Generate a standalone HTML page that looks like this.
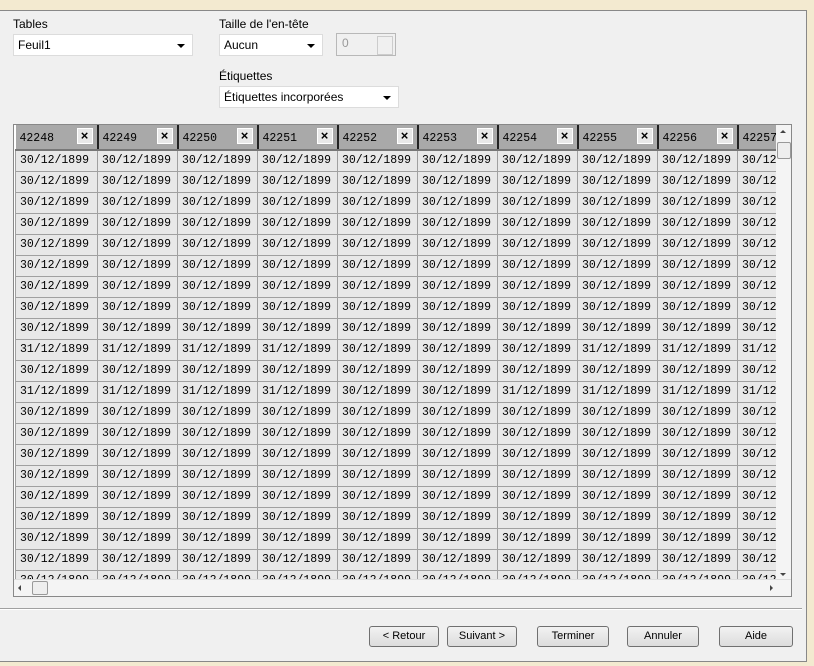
<!DOCTYPE html>
<html><head><meta charset="utf-8"><style>
body{margin:0;width:814px;height:666px;background:#f3ead0;position:relative;overflow:hidden;font-family:"Liberation Sans",sans-serif;font-size:11px;color:#000}
.dlg{position:absolute;left:0;top:10px;width:806px;height:650px;background:#f0f0f0;border-top:1px solid #888;border-right:1px solid #888;border-bottom:1px solid #888}
.lbl{position:absolute;font-size:12px}
.combo{position:absolute;height:22px;background:#fff;border:1px solid #dcdcdc;box-sizing:border-box;font-size:12px;line-height:20px;padding-left:4px}
.combo:after{content:"";position:absolute;right:7px;top:9px;border-left:4px solid transparent;border-right:4px solid transparent;border-top:4px solid #000}
.grid{position:absolute;left:13px;top:124px;width:779px;height:473px;border:1px solid #888;box-sizing:border-box;background:#fff;overflow:hidden}
.clip{position:absolute;left:1px;top:0px;width:762px;height:456px;overflow:hidden}
table{border-collapse:collapse;table-layout:fixed;width:800px;font-family:"Liberation Mono",monospace;font-size:11.5px}
td{height:21px;border:1px solid #a0a0a0;background:#e8e8e8;padding:0 0 0 4px;white-space:nowrap;overflow:hidden;box-sizing:border-box}
th{height:25px;background:#a9a9a9;text-align:left;font-weight:normal;padding:2px 0 0 4px;box-sizing:border-box;border-left:2px solid #222;border-bottom:2px solid #777;position:relative;overflow:hidden;white-space:nowrap}
th:first-child{border-left:none}
th span{position:absolute;right:4px;top:3px;width:14px;height:14px;background:#e8e8e8;border:1px solid #fff;font-family:"Liberation Sans",sans-serif;font-size:13px;font-weight:bold;line-height:14px;text-align:center}
.vs{position:absolute;right:0;top:0;width:15px;height:456px;background:#f4f4f4}
.hs{position:absolute;left:0;bottom:0;width:777px;height:16px;background:#f4f4f4;border-top:1px solid #ddd}
.btn{position:absolute;top:626px;height:21px;border:1px solid #707070;border-radius:3px;background:linear-gradient(#f2f2f2,#dcdcdc);box-sizing:border-box;font-size:11px;text-align:center;line-height:19px}
</style></head><body>
<div class="dlg"></div>
<div class="lbl" style="left:13px;top:17px">Tables</div>
<div class="combo" style="left:13px;top:34px;width:180px">Feuil1</div>
<div class="lbl" style="left:219px;top:17px">Taille de l'en-tête</div>
<div class="combo" style="left:219px;top:34px;width:104px">Aucun</div>
<div style="position:absolute;left:336px;top:33px;width:60px;height:23px;border:1px solid #b8b8b8;box-sizing:border-box;background:#f0f0f0;color:#999;font-size:12px;padding:2px 5px">0<div style="position:absolute;right:2px;top:2px;width:14px;height:17px;border:1px solid #ccc"></div></div>
<div class="lbl" style="left:219px;top:69px">Étiquettes</div>
<div class="combo" style="left:219px;top:86px;width:180px">Étiquettes incorporées</div>
<div class="grid"><div class="clip"><table>
<colgroup><col style="width:82px"><col style="width:80px"><col style="width:80px"><col style="width:80px"><col style="width:80px"><col style="width:80px"><col style="width:80px"><col style="width:80px"><col style="width:80px"><col style="width:78px"></colgroup>
<tr><th>42248<span>×</span></th><th>42249<span>×</span></th><th>42250<span>×</span></th><th>42251<span>×</span></th><th>42252<span>×</span></th><th>42253<span>×</span></th><th>42254<span>×</span></th><th>42255<span>×</span></th><th>42256<span>×</span></th><th>42257<span>×</span></th></tr>
<tr><td>30/12/1899</td><td>30/12/1899</td><td>30/12/1899</td><td>30/12/1899</td><td>30/12/1899</td><td>30/12/1899</td><td>30/12/1899</td><td>30/12/1899</td><td>30/12/1899</td><td>30/12/1899</td></tr>
<tr><td>30/12/1899</td><td>30/12/1899</td><td>30/12/1899</td><td>30/12/1899</td><td>30/12/1899</td><td>30/12/1899</td><td>30/12/1899</td><td>30/12/1899</td><td>30/12/1899</td><td>30/12/1899</td></tr>
<tr><td>30/12/1899</td><td>30/12/1899</td><td>30/12/1899</td><td>30/12/1899</td><td>30/12/1899</td><td>30/12/1899</td><td>30/12/1899</td><td>30/12/1899</td><td>30/12/1899</td><td>30/12/1899</td></tr>
<tr><td>30/12/1899</td><td>30/12/1899</td><td>30/12/1899</td><td>30/12/1899</td><td>30/12/1899</td><td>30/12/1899</td><td>30/12/1899</td><td>30/12/1899</td><td>30/12/1899</td><td>30/12/1899</td></tr>
<tr><td>30/12/1899</td><td>30/12/1899</td><td>30/12/1899</td><td>30/12/1899</td><td>30/12/1899</td><td>30/12/1899</td><td>30/12/1899</td><td>30/12/1899</td><td>30/12/1899</td><td>30/12/1899</td></tr>
<tr><td>30/12/1899</td><td>30/12/1899</td><td>30/12/1899</td><td>30/12/1899</td><td>30/12/1899</td><td>30/12/1899</td><td>30/12/1899</td><td>30/12/1899</td><td>30/12/1899</td><td>30/12/1899</td></tr>
<tr><td>30/12/1899</td><td>30/12/1899</td><td>30/12/1899</td><td>30/12/1899</td><td>30/12/1899</td><td>30/12/1899</td><td>30/12/1899</td><td>30/12/1899</td><td>30/12/1899</td><td>30/12/1899</td></tr>
<tr><td>30/12/1899</td><td>30/12/1899</td><td>30/12/1899</td><td>30/12/1899</td><td>30/12/1899</td><td>30/12/1899</td><td>30/12/1899</td><td>30/12/1899</td><td>30/12/1899</td><td>30/12/1899</td></tr>
<tr><td>30/12/1899</td><td>30/12/1899</td><td>30/12/1899</td><td>30/12/1899</td><td>30/12/1899</td><td>30/12/1899</td><td>30/12/1899</td><td>30/12/1899</td><td>30/12/1899</td><td>30/12/1899</td></tr>
<tr><td>31/12/1899</td><td>31/12/1899</td><td>31/12/1899</td><td>31/12/1899</td><td>30/12/1899</td><td>30/12/1899</td><td>30/12/1899</td><td>31/12/1899</td><td>31/12/1899</td><td>31/12/1899</td></tr>
<tr><td>30/12/1899</td><td>30/12/1899</td><td>30/12/1899</td><td>30/12/1899</td><td>30/12/1899</td><td>30/12/1899</td><td>30/12/1899</td><td>30/12/1899</td><td>30/12/1899</td><td>30/12/1899</td></tr>
<tr><td>31/12/1899</td><td>31/12/1899</td><td>31/12/1899</td><td>31/12/1899</td><td>30/12/1899</td><td>30/12/1899</td><td>31/12/1899</td><td>31/12/1899</td><td>31/12/1899</td><td>31/12/1899</td></tr>
<tr><td>30/12/1899</td><td>30/12/1899</td><td>30/12/1899</td><td>30/12/1899</td><td>30/12/1899</td><td>30/12/1899</td><td>30/12/1899</td><td>30/12/1899</td><td>30/12/1899</td><td>30/12/1899</td></tr>
<tr><td>30/12/1899</td><td>30/12/1899</td><td>30/12/1899</td><td>30/12/1899</td><td>30/12/1899</td><td>30/12/1899</td><td>30/12/1899</td><td>30/12/1899</td><td>30/12/1899</td><td>30/12/1899</td></tr>
<tr><td>30/12/1899</td><td>30/12/1899</td><td>30/12/1899</td><td>30/12/1899</td><td>30/12/1899</td><td>30/12/1899</td><td>30/12/1899</td><td>30/12/1899</td><td>30/12/1899</td><td>30/12/1899</td></tr>
<tr><td>30/12/1899</td><td>30/12/1899</td><td>30/12/1899</td><td>30/12/1899</td><td>30/12/1899</td><td>30/12/1899</td><td>30/12/1899</td><td>30/12/1899</td><td>30/12/1899</td><td>30/12/1899</td></tr>
<tr><td>30/12/1899</td><td>30/12/1899</td><td>30/12/1899</td><td>30/12/1899</td><td>30/12/1899</td><td>30/12/1899</td><td>30/12/1899</td><td>30/12/1899</td><td>30/12/1899</td><td>30/12/1899</td></tr>
<tr><td>30/12/1899</td><td>30/12/1899</td><td>30/12/1899</td><td>30/12/1899</td><td>30/12/1899</td><td>30/12/1899</td><td>30/12/1899</td><td>30/12/1899</td><td>30/12/1899</td><td>30/12/1899</td></tr>
<tr><td>30/12/1899</td><td>30/12/1899</td><td>30/12/1899</td><td>30/12/1899</td><td>30/12/1899</td><td>30/12/1899</td><td>30/12/1899</td><td>30/12/1899</td><td>30/12/1899</td><td>30/12/1899</td></tr>
<tr><td>30/12/1899</td><td>30/12/1899</td><td>30/12/1899</td><td>30/12/1899</td><td>30/12/1899</td><td>30/12/1899</td><td>30/12/1899</td><td>30/12/1899</td><td>30/12/1899</td><td>30/12/1899</td></tr>
<tr><td>30/12/1899</td><td>30/12/1899</td><td>30/12/1899</td><td>30/12/1899</td><td>30/12/1899</td><td>30/12/1899</td><td>30/12/1899</td><td>30/12/1899</td><td>30/12/1899</td><td>30/12/1899</td></tr>
</table></div>
<div class="vs"><div style="position:absolute;left:4px;top:5px;border-left:3px solid transparent;border-right:3px solid transparent;border-bottom:3px solid #444"></div><div style="position:absolute;left:1px;top:17px;width:12px;height:15px;border:1px solid #999;border-radius:2px;background:#eee"></div><div style="position:absolute;left:4px;bottom:5px;border-left:3px solid transparent;border-right:3px solid transparent;border-top:3px solid #444"></div></div>
<div class="hs"><div style="position:absolute;left:4px;top:5px;border-top:3px solid transparent;border-bottom:3px solid transparent;border-right:3px solid #444"></div><div style="position:absolute;left:18px;top:1px;width:14px;height:12px;border:1px solid #999;border-radius:2px;background:#eee"></div><div style="position:absolute;right:18px;top:5px;border-top:3px solid transparent;border-bottom:3px solid transparent;border-left:3px solid #444"></div></div>
</div>
<div style="position:absolute;left:0;top:608px;width:802px;height:1px;background:#a0a0a0;border-bottom:1px solid #fff"></div>
<div class="btn" style="left:369px;width:70px">&lt; Retour</div>
<div class="btn" style="left:447px;width:70px">Suivant &gt;</div>
<div class="btn" style="left:537px;width:72px">Terminer</div>
<div class="btn" style="left:627px;width:72px">Annuler</div>
<div class="btn" style="left:719px;width:74px">Aide</div>
</body></html>
